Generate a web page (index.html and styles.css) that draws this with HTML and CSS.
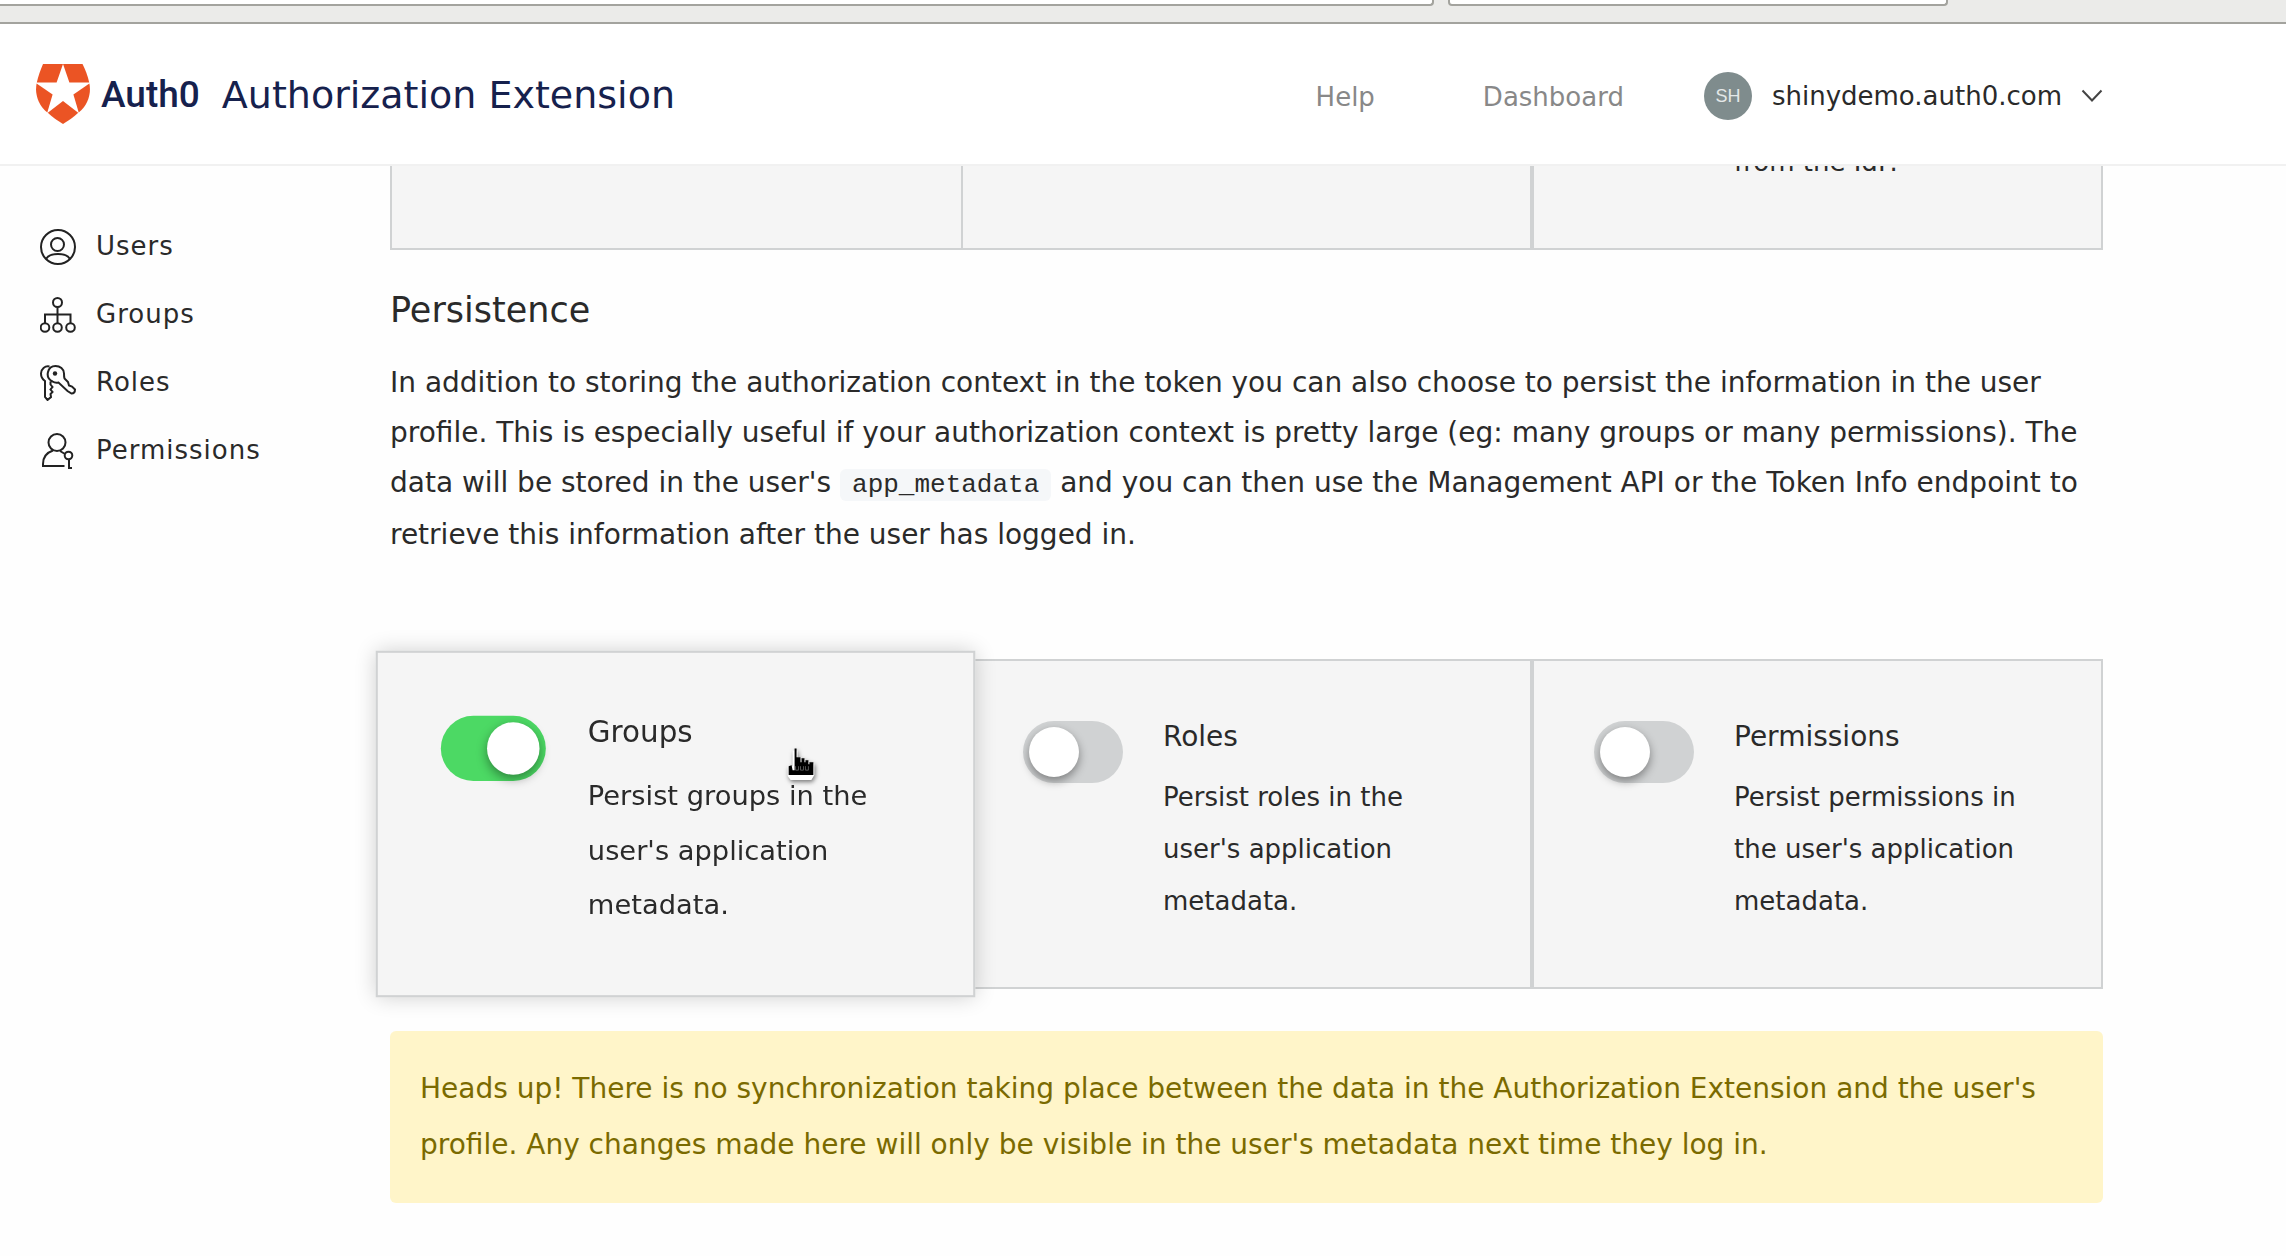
FILE: index.html
```html
<!DOCTYPE html>
<html lang="en">
<head>
<meta charset="utf-8">
<title>Authorization Extension</title>
<link rel="stylesheet" href="styles.css">
</head>
<body>
<div class="toolbar">
  <input class="toolbar-field address" type="text" aria-label="Address">
  <input class="toolbar-field search" type="text" aria-label="Search">
</div>

<header class="header">
  <a class="brand" href="#">
    <svg class="shield" viewBox="0 0 54 60" aria-hidden="true">
      <path d="M7 0H27L20.6 18.4H.8C2.200 12 4.500 6 7 0Z"/>
      <path d="M27 0H46.500C49.500 6 51.800 12 53.200 18.400H33.400Z"/>
      <path d="M.6 19.500L16.600 30.600L11.300 48.500C2.500 41.500-1.500 30.500.6 19.500Z"/>
      <path d="M53.400 19.500L37.400 30.600L42.700 48.500C51.500 41.500 55.500 30.500 53.400 19.500Z"/>
      <path d="M27 37L42.200 48.700C37.500 53 32 57 27 60C22 57 16.500 53 11.800 48.700Z"/>
    </svg>
    <span class="brand-name">Auth0</span>
    <span class="brand-title">Authorization Extension</span>
  </a>
  <nav class="top-links" aria-label="Account">
    <a class="top-link" href="#">Help</a>
    <a class="top-link" href="#">Dashboard</a>
    <button class="account" type="button">
      <span class="avatar">SH</span>
      <span class="tenant">shinydemo.auth0.com</span>
      <svg class="chevron" viewBox="0 0 22 14" aria-hidden="true"><path d="M1.500 1.500L11 11.500L20.500 1.500"/></svg>
    </button>
  </nav>
</header>

<div class="layout">
  <nav class="sidebar" aria-label="Main">
    <a class="side-link" href="#">
      <svg class="icon" viewBox="0 0 36 36" aria-hidden="true"><circle cx="18" cy="18" r="17"/><circle cx="17.500" cy="15.500" r="6.500"/><path d="M6 30C8 26.500 12.500 25 18 25S28 26.500 30 30"/></svg>
      Users
    </a>
    <a class="side-link" href="#">
      <svg class="icon" viewBox="0 0 36 36" aria-hidden="true"><circle cx="17.500" cy="5.500" r="4.500"/><circle cx="5" cy="30.500" r="4.300"/><circle cx="17.500" cy="30.500" r="4.300"/><circle cx="30.500" cy="30.500" r="4.300"/><path d="M17.500 10V26M5 26V17.500H30.500V26"/></svg>
      Groups
    </a>
    <a class="side-link" href="#">
      <svg class="icon" viewBox="0 0 36 36" aria-hidden="true"><path d="M12.500 16.500C8.500 14.500 7 11 8 7C9 3 12 1 15.500 1C20 1 24 4 24 8.500C24 10.500 24 12 24.500 13.500L28 17L29 20.500L32 21.500L35 24.500C35 27 33.500 28.500 31.500 28.500L27.500 26L18.500 17.500C16.500 18 14 17.500 12.500 16.500ZM9.500 1.500C5 .5 1 4 1 8.500C1 11.500 2 14 5 16V32L7.500 35L11 32L10.500 29L12.500 27L10.500 24.500L12.500 22L10.500 19.500V16.500"/><circle class="dot" cx="15" cy="8.500" r="2.200"/></svg>
      Roles
    </a>
    <a class="side-link" href="#">
      <svg class="icon" viewBox="0 0 36 36" aria-hidden="true"><circle cx="17" cy="9.500" r="8.500"/><path d="M13 17.500C7 19.500 3 24 3 31V33H24.500M20 18L25 21M29 26.500V35H32"/><circle cx="28.500" cy="22.500" r="3.800"/></svg>
      Permissions
    </a>
  </nav>

  <main class="content">
    <div class="cards cards-scrolled">
      <div class="card"></div>
      <div class="card"></div>
      <div class="card"><p class="card-text last-line">from the IdP.</p></div>
    </div>

    <h2 class="heading">Persistence</h2>
    <p class="intro">In addition to storing the authorization context in the token you can also choose to persist the information in the user profile. This is especially useful if your authorization context is pretty large (eg: many groups or many permissions). The data will be stored in the user's <code class="code">app_metadata</code> and you can then use the Management API or the Token Info endpoint to retrieve this information after the user has logged in.</p>

    <div class="cards">
      <div class="card card-active">
        <input class="toggle" id="persist-groups" type="checkbox" checked>
        <div class="card-body">
          <label class="card-title" for="persist-groups">Groups</label>
          <p class="card-text">Persist groups in the user's application metadata.</p>
        </div>
        <svg class="pointer" viewBox="0 0 30 34" aria-hidden="true">
          <path class="pointer-edge" d="M6 2H11V9H15V11H19V13H23V15H28V27L25 32H4L1 28V18H6Z"/>
          <path class="pointer-hand" d="M8 0H10V9H14V14H15V10H18V14H19V12H22V16H23V14H27V27H2V18L5 17L6 22H8Z"/>
          <path class="pointer-mark" d="M9 18V22H12V18M14 18V22H17V18M19 18V22H22V18"/>
        </svg>
      </div>
      <div class="card">
        <input class="toggle" id="persist-roles" type="checkbox">
        <div class="card-body">
          <label class="card-title" for="persist-roles">Roles</label>
          <p class="card-text">Persist roles in the user's application metadata.</p>
        </div>
      </div>
      <div class="card">
        <input class="toggle" id="persist-permissions" type="checkbox">
        <div class="card-body">
          <label class="card-title" for="persist-permissions">Permissions</label>
          <p class="card-text">Persist permissions in the user's application metadata.</p>
        </div>
      </div>
    </div>

    <p class="notice">Heads up! There is no synchronization taking place between the data in the Authorization Extension and the user's profile. Any changes made here will only be visible in the user's metadata next time they log in.</p>
  </main>
</div>
</body>
</html>
```
FILE: styles.css
```css
* {
  box-sizing: border-box;
}

body {
  margin: 0;
  background: #fefefe;
  color: #2a2a2a;
  font-family: "DejaVu Sans", sans-serif;
  font-size: 26px;
}

a {
  color: inherit;
  text-decoration: none;
}

/* Browser toolbar edge */
.toolbar {
  display: grid;
  grid-template-columns: 1434fr 500fr 324fr;
  column-gap: 14px;
  height: 24px;
  background: #ebebe9;
  border-bottom: 2px solid #a3a39e;
}

.toolbar-field {
  width: 100%;
  height: 6px;
  padding: 0;
  background: #fff;
  border: 2px solid #a3a39e;
  border-top: 0;
  border-radius: 0 0 4px 4px;
}

.address {
  border-left: 0;
  border-bottom-left-radius: 0;
}

/* Header */
.header {
  display: flex;
  align-items: center;
  justify-content: space-between;
  height: 142px;
  padding: 0 183px 0 36px;
  background: #fff;
  border-bottom: 2px solid #f1f1f1;
}

.brand {
  display: flex;
  align-items: center;
  color: #16214d;
  white-space: nowrap;
}

.shield {
  width: 54px;
  height: 60px;
  fill: #eb5424;
}

.brand-name,
.brand-title {
  padding-top: 2px;
  line-height: 44px;
}

.brand-name {
  margin-left: 11px;
  font-family: Roboto, sans-serif;
  font-size: 37px;
  font-weight: 500;
}

.brand-title {
  margin-left: 22px;
  font-size: 38px;
}

.top-links {
  display: flex;
  align-items: center;
  padding-top: 4px;
}

.top-link {
  margin-right: 108px;
  padding-top: 2px;
  color: #888;
  line-height: 32px;
}

.top-link + .top-link {
  margin-right: 80px;
}

.account {
  display: flex;
  align-items: center;
  padding: 0;
  background: none;
  border: 0;
  color: #2a2a2a;
  font: inherit;
}

.avatar {
  width: 48px;
  margin-right: 20px;
  border-radius: 50%;
  background: #7f8c8d;
  color: #e4e8e8;
  font-family: "Liberation Sans", sans-serif;
  font-size: 18px;
  line-height: 48px;
  text-align: center;
}

.chevron {
  width: 22px;
  height: 14px;
  margin-left: 19px;
  fill: none;
  stroke: #444;
  stroke-width: 2;
}

/* Page body */
.layout {
  display: grid;
  grid-template-columns: 390px 1fr;
  padding-right: 183px;
}

.sidebar {
  display: flex;
  flex-direction: column;
  padding: 46px 0 0 40px;
}

.side-link {
  display: flex;
  align-items: center;
  gap: 20px;
  height: 68px;
  letter-spacing: 1px;
}

.icon {
  width: 36px;
  height: 36px;
  margin-top: 2px;
  fill: none;
  stroke: #222;
  stroke-width: 2;
}

.dot {
  fill: #222;
  stroke: none;
}

.heading {
  margin: 38px 0 26px;
  font-size: 35px;
  font-weight: 400;
  line-height: 44px;
}

.intro {
  margin: 0 0 99px;
  font-size: 28px;
  line-height: 50px;
}

.code {
  padding: 1px 12px;
  border-radius: 6px;
  background: #f5f7f9;
  font-family: "Liberation Mono", monospace;
  font-size: 26px;
}

/* Setting cards */
.cards {
  display: grid;
  grid-template-columns: repeat(3, 1fr);
}

.card {
  display: flex;
  align-items: flex-start;
  gap: 40px;
  padding: 60px;
  background: #f5f5f5;
  border: 2px solid #d0d2d3;
}

.card-body {
  flex: 1;
}

.card-title {
  display: block;
  margin-bottom: 18px;
  font-size: 28px;
  line-height: 32px;
}

.card-text {
  margin: 0;
  line-height: 52px;
}

.card-active {
  position: relative;
  transform: scale(1.05);
  box-shadow: 0 0 20px rgba(0, 0, 0, 0.2);
}

/* Upper row, scrolled mostly out of view below the header */
.cards-scrolled {
  height: 84px;
  overflow: hidden;
}

.cards-scrolled .card {
  height: 84px;
  align-items: flex-end;
  padding-top: 0;
  border-top: 0;
}

.cards-scrolled .card:first-child {
  border-right: 0;
}

.last-line {
  margin-left: 140px;
}

.toggle {
  appearance: none;
  flex: none;
  display: flex;
  width: 100px;
  height: 62px;
  margin: 0;
  padding: 6px;
  border-radius: 31px;
  background: #d0d2d3;
}

.toggle::before {
  content: "";
  width: 50px;
  height: 50px;
  border-radius: 50%;
  background: #fff;
  box-shadow: 0 4px 10px rgba(0, 0, 0, 0.4);
}

.toggle:checked {
  justify-content: flex-end;
  background: #4cd964;
}

/* Hand pointer over the hovered card */
.pointer {
  position: absolute;
  left: 389px;
  top: 91px;
  width: 29px;
  height: 32px;
  overflow: visible;
  filter: drop-shadow(1px 2px 2px rgba(0, 0, 0, 0.5));
}

.pointer-edge {
  fill: #fff;
}

.pointer-hand {
  fill: #000;
}

.pointer-mark {
  fill: none;
  stroke: #555;
  stroke-width: 1;
}

.notice {
  margin: 42px 0 54px;
  padding: 30px;
  border-radius: 6px;
  background: #fff5c9;
  color: #7a6a00;
  font-size: 28px;
  line-height: 56px;
}
```
